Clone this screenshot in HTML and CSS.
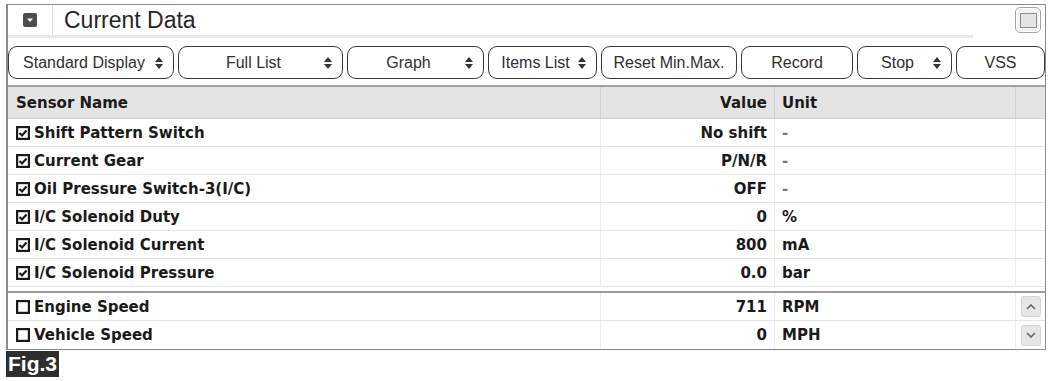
FILE: index.html
```html
<!DOCTYPE html>
<html lang="en">
<head>
  <meta charset="UTF-8" />
  <title>Current Data</title>
  <link rel="stylesheet" href="styles.css">
</head>
<body>

  <div class="panel">
    <div class="titlebar">
      <div class="title-icon">
        <svg width="14" height="14" viewBox="0 0 14 14"><rect x="0" y="0" width="14" height="14" rx="2" fill="#4d4d4d"/><path d="M4 5.5 L10 5.5 L7 9 Z" fill="#fff"/></svg>
      </div>
      <div class="title">Current Data</div>
      <div class="win-btn"><span class="win-inner"></span></div>
    </div>
    <div class="title-rule"></div>

    <div class="toolbar">
      <div class="btn sel"><span class="label">Standard Display</span><svg class="arrow" width="8" height="12" viewBox="0 0 8 12"><path d="M0 5 L4 0 L8 5 Z M0 7 L8 7 L4 12 Z" fill="#333"/></svg></div>
      <div class="btn sel"><span class="label">Full List</span><svg class="arrow" width="8" height="12" viewBox="0 0 8 12"><path d="M0 5 L4 0 L8 5 Z M0 7 L8 7 L4 12 Z" fill="#333"/></svg></div>
      <div class="btn sel"><span class="label">Graph</span><svg class="arrow" width="8" height="12" viewBox="0 0 8 12"><path d="M0 5 L4 0 L8 5 Z M0 7 L8 7 L4 12 Z" fill="#333"/></svg></div>
      <div class="btn sel"><span class="label">Items List</span><svg class="arrow" width="8" height="12" viewBox="0 0 8 12"><path d="M0 5 L4 0 L8 5 Z M0 7 L8 7 L4 12 Z" fill="#333"/></svg></div>
      <div class="btn">Reset Min.Max.</div>
      <div class="btn">Record</div>
      <div class="btn sel"><span class="label">Stop</span><svg class="arrow" width="8" height="12" viewBox="0 0 8 12"><path d="M0 5 L4 0 L8 5 Z M0 7 L8 7 L4 12 Z" fill="#333"/></svg></div>
      <div class="btn">VSS</div>
    </div>

    <div class="grid">
      <div class="row head">
        <div class="cell name">Sensor Name</div>
        <div class="cell val">Value</div>
        <div class="cell unit">Unit</div>
        <div class="cell last"></div>
      </div>

      <div class="row">
        <div class="cell name"><svg class="chk" width="14" height="14" viewBox="0 0 14 14"><rect x="1.1" y="1.1" width="11.8" height="11.8" fill="#fff" stroke="#1a1a1a" stroke-width="2.2"/><path d="M3.5 7 L6 9.5 L10.5 4.5" fill="none" stroke="#1a1a1a" stroke-width="2.2"/></svg>Shift Pattern Switch</div>
        <div class="cell val">No shift</div>
        <div class="cell unit dash">-</div>
        <div class="cell last"></div>
      </div>
      <div class="row">
        <div class="cell name"><svg class="chk" width="14" height="14" viewBox="0 0 14 14"><rect x="1.1" y="1.1" width="11.8" height="11.8" fill="#fff" stroke="#1a1a1a" stroke-width="2.2"/><path d="M3.5 7 L6 9.5 L10.5 4.5" fill="none" stroke="#1a1a1a" stroke-width="2.2"/></svg>Current Gear</div>
        <div class="cell val">P/N/R</div>
        <div class="cell unit dash">-</div>
        <div class="cell last"></div>
      </div>
      <div class="row">
        <div class="cell name"><svg class="chk" width="14" height="14" viewBox="0 0 14 14"><rect x="1.1" y="1.1" width="11.8" height="11.8" fill="#fff" stroke="#1a1a1a" stroke-width="2.2"/><path d="M3.5 7 L6 9.5 L10.5 4.5" fill="none" stroke="#1a1a1a" stroke-width="2.2"/></svg>Oil Pressure Switch-3(I/C)</div>
        <div class="cell val">OFF</div>
        <div class="cell unit dash">-</div>
        <div class="cell last"></div>
      </div>
      <div class="row">
        <div class="cell name"><svg class="chk" width="14" height="14" viewBox="0 0 14 14"><rect x="1.1" y="1.1" width="11.8" height="11.8" fill="#fff" stroke="#1a1a1a" stroke-width="2.2"/><path d="M3.5 7 L6 9.5 L10.5 4.5" fill="none" stroke="#1a1a1a" stroke-width="2.2"/></svg>I/C Solenoid Duty</div>
        <div class="cell val">0</div>
        <div class="cell unit">%</div>
        <div class="cell last"></div>
      </div>
      <div class="row">
        <div class="cell name"><svg class="chk" width="14" height="14" viewBox="0 0 14 14"><rect x="1.1" y="1.1" width="11.8" height="11.8" fill="#fff" stroke="#1a1a1a" stroke-width="2.2"/><path d="M3.5 7 L6 9.5 L10.5 4.5" fill="none" stroke="#1a1a1a" stroke-width="2.2"/></svg>I/C Solenoid Current</div>
        <div class="cell val">800</div>
        <div class="cell unit">mA</div>
        <div class="cell last"></div>
      </div>
      <div class="row">
        <div class="cell name"><svg class="chk" width="14" height="14" viewBox="0 0 14 14"><rect x="1.1" y="1.1" width="11.8" height="11.8" fill="#fff" stroke="#1a1a1a" stroke-width="2.2"/><path d="M3.5 7 L6 9.5 L10.5 4.5" fill="none" stroke="#1a1a1a" stroke-width="2.2"/></svg>I/C Solenoid Pressure</div>
        <div class="cell val">0.0</div>
        <div class="cell unit">bar</div>
        <div class="cell last"></div>
      </div>

      <div class="split"></div>

      <div class="row">
        <div class="cell name"><svg class="chk" width="14" height="14" viewBox="0 0 14 14"><rect x="1.1" y="1.1" width="11.8" height="11.8" fill="#fff" stroke="#1a1a1a" stroke-width="2.2"/></svg>Engine Speed</div>
        <div class="cell val">711</div>
        <div class="cell unit">RPM</div>
        <div class="cell last"><span class="scroll-btn"><svg width="10" height="6" viewBox="0 0 10 6"><path d="M1 5 L5 1 L9 5" fill="none" stroke="#666" stroke-width="1.6"/></svg></span></div>
      </div>
      <div class="row end">
        <div class="cell name"><svg class="chk" width="14" height="14" viewBox="0 0 14 14"><rect x="1.1" y="1.1" width="11.8" height="11.8" fill="#fff" stroke="#1a1a1a" stroke-width="2.2"/></svg>Vehicle Speed</div>
        <div class="cell val">0</div>
        <div class="cell unit">MPH</div>
        <div class="cell last"><span class="scroll-btn"><svg width="10" height="6" viewBox="0 0 10 6"><path d="M1 1 L5 5 L9 1" fill="none" stroke="#666" stroke-width="1.6"/></svg></span></div>
      </div>
    </div>
  </div>

  <div class="fig">Fig.3</div>

</body>
</html>
```

FILE: styles.css
```css
* {
  box-sizing: border-box;
}

body {
  margin: 0;
  padding: 4px 0 0 6px;
  background: #fff;
  font-family: 'Liberation Sans', Arial, sans-serif;
  color: #222;
}

.panel {
  width: 1040px;
  border: 1px solid #8c8c8c;
  border-left: 2px solid #8c8c8c;
  background: #fff;
}

/* title bar */
.titlebar {
  display: flex;
  align-items: center;
  height: 30px;
}

.title-icon {
  width: 45px;
  height: 100%;
  border-right: 1px solid #dedede;
  display: flex;
  align-items: center;
  justify-content: center;
}

.title {
  padding-left: 11px;
  font-size: 23px;
  color: #262626;
}

.win-btn {
  margin-left: auto;
  margin-right: 4px;
  width: 26px;
  height: 26px;
  border: 1px solid #a5a5a5;
  border-radius: 5px;
  background: #f3f3f3;
  display: flex;
  align-items: center;
  justify-content: center;
  box-shadow: inset 0 0 0 1px #fff;
}

.win-inner {
  width: 17px;
  height: 15px;
  border: 1px solid #8e8e8e;
  background: #e4e4e4;
}

.title-rule {
  height: 3px;
  margin-right: 72px;
  background: #e8e8e8;
}

/* toolbar */
.toolbar {
  display: grid;
  grid-template-columns: 166px 165px 137px 109px 136px 112px 95px 89px;
  gap: 4px;
  padding: 8px 0 6px;
}

.btn {
  height: 33px;
  border: 1.5px solid #3a3a3a;
  border-radius: 9px;
  background: #fff;
  display: flex;
  align-items: center;
  justify-content: center;
  padding: 0 8px;
  font-size: 16px;
  color: #303030;
  white-space: nowrap;
}

.btn.sel {
  padding-right: 10px;
}

.btn.sel .label {
  flex: 1;
  text-align: center;
}

.arrow {
  flex: none;
  margin-left: 4px;
}

/* data grid */
.grid {
  font-family: 'DejaVu Sans', Verdana, sans-serif;
  font-weight: bold;
  font-size: 15px;
  color: #1a1a1a;
}

.row {
  display: grid;
  grid-template-columns: 593px 174px 241px 1fr;
  height: 28px;
  border-bottom: 1px solid #e4e4e4;
}

.row.head {
  height: 34px;
  background: #e4e4e4;
  border-top: 2px solid #a3a3a3;
  border-bottom: 1px solid #d2d2d2;
}

.row.end {
  border-bottom: none;
}

.cell {
  display: flex;
  align-items: center;
  border-right: 1px solid #ededed;
  white-space: nowrap;
}

.row.head .cell {
  border-right-color: #cfcfcf;
}

.cell.last {
  border-right: none;
  justify-content: center;
}

.name {
  padding-left: 8px;
}

.chk {
  flex: none;
  margin-right: 4px;
}

.val {
  justify-content: flex-end;
  padding-right: 7px;
}

.unit {
  padding-left: 7px;
}

.unit.dash {
  color: #777;
}

.split {
  height: 6px;
  border-bottom: 2px solid #9c9c9c;
}

.scroll-btn {
  width: 20px;
  height: 21px;
  border: 1px solid #d4d4d4;
  border-radius: 3px;
  background: #e6e6e6;
  display: flex;
  align-items: center;
  justify-content: center;
}

/* figure label */
.fig {
  display: inline-block;
  margin-top: 1px;
  padding: 0 2px;
  background: #2e2e2e;
  color: #fff;
  font-weight: bold;
  font-size: 21px;
  line-height: 26px;
}
```
